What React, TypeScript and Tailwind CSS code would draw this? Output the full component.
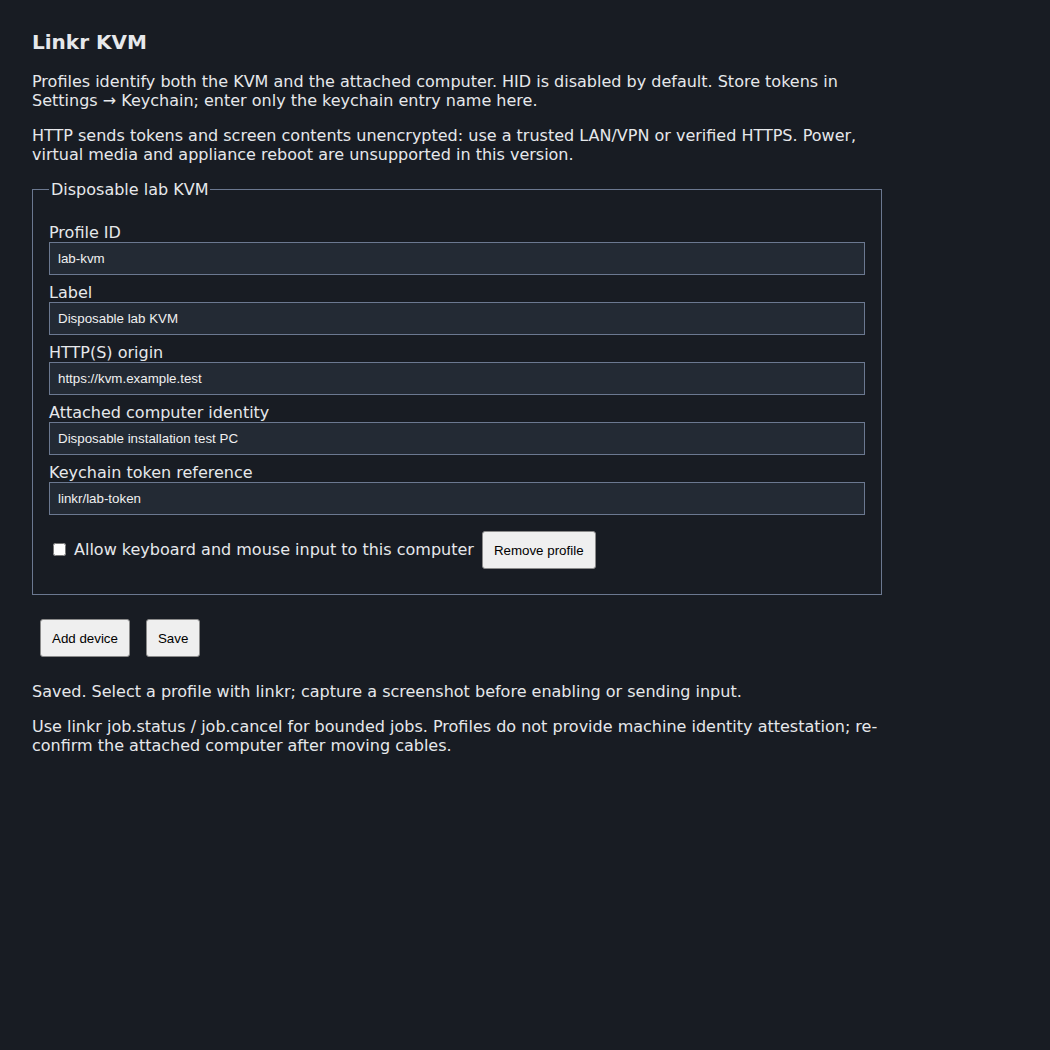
const fields = [
  { label: "Profile ID", value: "lab-kvm" },
  { label: "Label", value: "Disposable lab KVM" },
  { label: "HTTP(S) origin", value: "https://kvm.example.test" },
  { label: "Attached computer identity", value: "Disposable installation test PC" },
  { label: "Keychain token reference", value: "linkr/lab-token" },
];

const font = "font-['DejaVu_Sans',sans-serif]";
const btn =
  "m-2 h-[38px] px-[11px] rounded-[3px] border border-[#8a8a8a] bg-[#efefef] text-black text-[13.33px] font-['Liberation_Sans',Arial,sans-serif]";

export default function App() {
  return (
    <div className={`min-h-[1050px] bg-[#181c23] text-[#e6e8eb] ${font} text-[16px] leading-[normal] px-8 pt-[30px]`}>
      <div className="w-[850px]">
        <h1 className="text-[20px] font-bold leading-[24px] mb-[18px]">Linkr KVM</h1>
        <p className="mb-4">
          Profiles identify both the KVM and the attached computer. HID is disabled by default. Store tokens in
          Settings → Keychain; enter only the keychain entry name here.
        </p>
        <p className="mb-4">
          HTTP sends tokens and screen contents unencrypted: use a trusted LAN/VPN or verified HTTPS. Power,
          virtual media and appliance reboot are unsupported in this version.
        </p>

        <fieldset className="border border-[#6b7890] px-4 pb-[17px] pt-4">
          <legend className="px-[2px]">Disposable lab KVM</legend>
          <div className="flex flex-col gap-2 pt-2">
            {fields.map((f) => (
              <label key={f.label} className="flex flex-col">
                <span>{f.label}</span>
                <input
                  defaultValue={f.value}
                  className="h-[33px] px-2 border border-[#6b7890] bg-[#232a34] text-[#f0f0f0] text-[13.33px] font-['Liberation_Sans',Arial,sans-serif] outline-none"
                />
              </label>
            ))}
          </div>
          <div className="flex items-center mt-2">
            <label className="flex items-center">
              <input type="checkbox" className="w-[13px] h-[13px] ml-1 mr-2 -mt-[2px]" />
              <span className="-mt-[1px]">Allow keyboard and mouse input to this computer</span>
            </label>
            <button className={btn}>Remove profile</button>
          </div>
        </fieldset>

        <div className="flex mt-4 mb-[17px]">
          <button className={btn}>Add device</button>
          <button className={`${btn} bg-[#e4e4e4]`}>Save</button>
        </div>

        <p className="mb-4">Saved. Select a profile with linkr; capture a screenshot before enabling or sending input.</p>
        <p>
          Use linkr job.status / job.cancel for bounded jobs. Profiles do not provide machine identity attestation; re-
          confirm the attached computer after moving cables.
        </p>
      </div>
    </div>
  );
}
